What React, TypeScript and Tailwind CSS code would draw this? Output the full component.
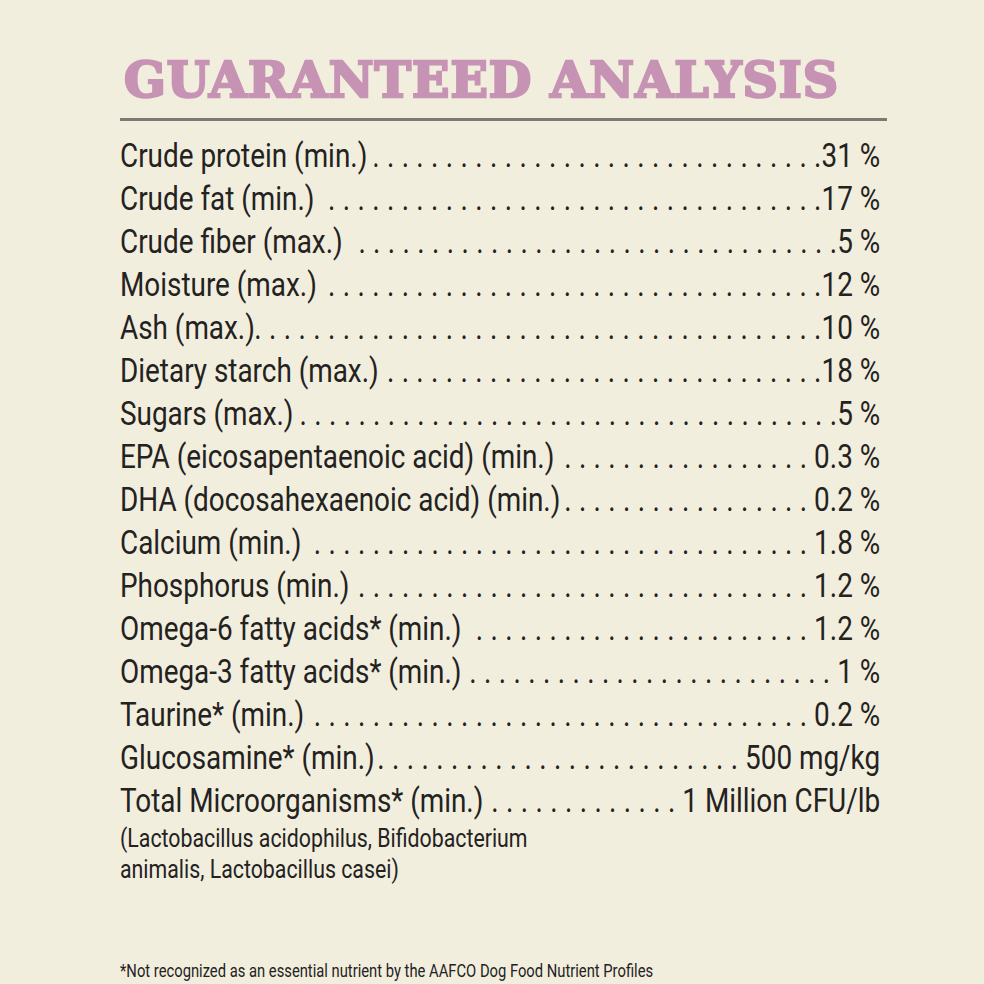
import React from "react";

type Row = {
  label: string;
  value: string;
};

const rows: Row[] = [
  { label: "Crude protein (min.) ", value: "31 %" },
  { label: "Crude fat (min.) ", value: "17 %" },
  { label: "Crude fiber (max.) ", value: "5 %" },
  { label: "Moisture (max.) ", value: "12 %" },
  { label: "Ash (max.)", value: "10 %" },
  { label: "Dietary starch (max.) ", value: "18 %" },
  { label: "Sugars (max.) ", value: "5 %" },
  { label: "EPA (eicosapentaenoic acid) (min.) ", value: " 0.3 %" },
  { label: "DHA (docosahexaenoic acid) (min.)", value: " 0.2 %" },
  { label: "Calcium (min.) ", value: " 1.8 %" },
  { label: "Phosphorus (min.)", value: " 1.2 %" },
  { label: "Omega-6 fatty acids* (min.) ", value: " 1.2 %" },
  { label: "Omega-3 fatty acids* (min.) ", value: " 1 %" },
  { label: "Taurine* (min.)", value: " 0.2 %" },
  { label: "Glucosamine* (min.)", value: " 500 mg/kg" },
  { label: "Total Microorganisms* (min.)", value: " 1 Million CFU/lb" },
];

const dots = ".".repeat(80);

function AnalysisRow({ label, value }: Row) {
  return (
    <div className="flex h-[43px] items-baseline leading-[43px] whitespace-pre">
      <span>{label}</span>
      <span className="flex flex-1 justify-end overflow-hidden tracking-[9px]">
        {dots}
      </span>
      <span className="-ml-[9px]">{value}</span>
    </div>
  );
}

export default function App() {
  return (
    <div className="h-[984px] w-full overflow-hidden bg-[#f2eedd] text-[#23221f]">
      <div className="ml-[120px] w-[767px] pt-[56px]">
        <h1 className="pl-[4px] font-['DejaVu_Serif',serif] text-[49px] font-bold leading-none tracking-[1px] text-[#c793b4] [-webkit-text-stroke:2.5px_#c793b4]">
          GUARANTEED ANALYSIS
        </h1>
        <div className="mt-[13px] h-[3px] bg-[#7b7a74]" />

        <div className="mt-[13px] w-[927px] origin-top-left scale-x-[0.82] font-['Roboto',sans-serif] text-[34px]">
          {rows.map((row) => (
            <AnalysisRow key={row.label} label={row.label} value={row.value} />
          ))}
          <div className="mt-[1px] text-[26px] leading-[31px]">
            (Lactobacillus acidophilus, Bifidobacterium
            <br />
            animalis, Lactobacillus casei)
          </div>
          <div className="mt-[76px] text-[18px] leading-[20px]">
            *Not recognized as an essential nutrient by the AAFCO Dog Food Nutrient Profiles
          </div>
        </div>
      </div>
    </div>
  );
}
